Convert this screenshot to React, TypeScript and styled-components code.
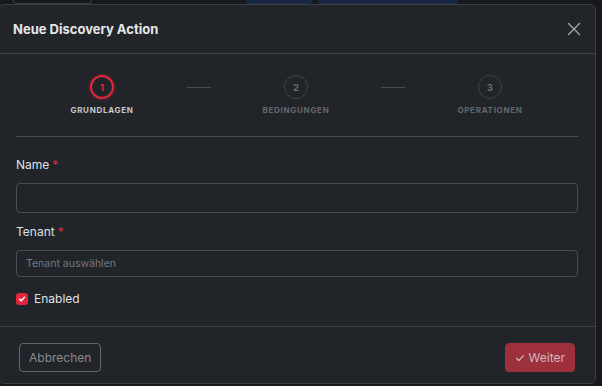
import React from "react";
import styled, { createGlobalStyle } from "styled-components";

const Global = createGlobalStyle`
  html, body { margin: 0; padding: 0; background: #17191c; overflow: hidden; }
  body { font-family: Inter, "Noto Sans", sans-serif; -webkit-font-smoothing: antialiased; }
  * { box-sizing: border-box; }
`;

const Page = styled.div`
  position: relative;
  width: 602px;
  height: 386px;
  background: #17191c;
  overflow: hidden;
`;

const PageBar = styled.div`
  display: flex;
  align-items: flex-end;
  gap: 6px;
  height: 20px;
  margin-top: -16px;
  padding-left: 13px;
`;

const Tag = styled.span<{ $blue?: boolean; $w?: number }>`
  display: inline-block;
  height: 20px;
  width: ${(p) => (p.$w ? `${p.$w}px` : "auto")};
  padding: 2px 8px;
  font-size: 11px;
  color: #6b6f75;
  border: 1px solid ${(p) => (p.$blue ? "#1d2c4a" : "#3a3d42")};
  background: ${(p) => (p.$blue ? "#172542" : "transparent")};
  border-radius: 3px;
`;

const Spacer = styled.div<{ $w: number }>`
  width: ${(p) => p.$w}px;
`;

const Overlay = styled.div`
  position: absolute;
  left: -2px;
  top: 4px;
  width: 598px;
  height: 380px;
`;

const Modal = styled.div`
  width: 100%;
  height: 100%;
  background: #212429;
  border: 1px solid #3b3e43;
  border-radius: 6px;
  display: flex;
  flex-direction: column;
  color: #e3e5e8;
`;

const Header = styled.div`
  display: flex;
  align-items: center;
  justify-content: space-between;
  height: 49px;
  padding: 0 12px 0 14px;
  border-bottom: 1px solid #3e4146;
`;

const Title = styled.h1`
  margin: 0;
  font-size: 13px;
  font-weight: 700;
  color: #e6e7e9;
`;

const CloseButton = styled.button`
  background: none;
  border: none;
  padding: 0;
  width: 18px;
  height: 18px;
  display: flex;
  align-items: center;
  justify-content: center;
  cursor: pointer;
`;

const Body = styled.div`
  flex: 1;
  padding: 0 17px;
  display: flex;
  flex-direction: column;
`;

const Stepper = styled.div`
  display: flex;
  align-items: flex-start;
  padding: 21px 0 0 1px;
  height: 83px;
  border-bottom: 1px solid #4a4d52;
`;

const Step = styled.div`
  width: 170px;
  display: flex;
  flex-direction: column;
  align-items: center;
`;

const Circle = styled.div<{ $active?: boolean }>`
  width: 24px;
  height: 24px;
  border-radius: 50%;
  border: ${(p) => (p.$active ? "2px solid #e0283c" : "1px solid #3f4247")};
  box-shadow: ${(p) => (p.$active ? "0 0 4px rgba(224, 40, 60, 0.45)" : "none")};
  color: ${(p) => (p.$active ? "#e0283c" : "#6d7177")};
  font-size: 9px;
  font-weight: 700;
  display: flex;
  align-items: center;
  justify-content: center;
`;

const StepLabel = styled.div<{ $active?: boolean }>`
  margin-top: 6px;
  font-size: 8px;
  font-weight: 700;
  letter-spacing: 0.7px;
  text-transform: uppercase;
  color: ${(p) => (p.$active ? "#c9cbce" : "#64686e")};
`;

const Connector = styled.div`
  width: 24px;
  height: 1px;
  margin-top: 12px;
  background: #4a4d52;
`;

const Form = styled.div`
  display: flex;
  flex-direction: column;
  padding-top: 20px;
`;

const Label = styled.label`
  font-size: 12px;
  font-weight: 400;
  color: #dfe1e4;
  line-height: 15px;
  margin-bottom: 11px;
`;

const Required = styled.span`
  color: #e0283c;
  margin-left: 3px;
`;

const Input = styled.input<{ $h: number }>`
  width: 100%;
  height: ${(p) => p.$h}px;
  background: transparent;
  border: 1px solid #4a4d53;
  border-radius: 4px;
  padding: 0 9px;
  font-family: inherit;
  font-size: 10.5px;
  color: #dfe1e4;
  outline: none;
  margin-bottom: 11px;
  &::placeholder { color: #74787e; }
`;

const CheckRow = styled.label`
  display: flex;
  align-items: center;
  gap: 6px;
  font-size: 12px;
  font-weight: 400;
  color: #dfe1e4;
  margin-top: 3px;
`;

const CheckBox = styled.span`
  width: 12px;
  height: 12px;
  border-radius: 3px;
  background: #e0283c;
  display: flex;
  align-items: center;
  justify-content: center;
`;

const Footer = styled.div`
  height: 57px;
  border-top: 1px solid #3e4146;
  display: flex;
  align-items: flex-start;
  justify-content: space-between;
  padding: 16px 20px 0 20px;
`;

const Button = styled.button<{ $primary?: boolean }>`
  height: 29px;
  padding: 0 9px;
  border-radius: 4px;
  font-family: inherit;
  font-size: 12px;
  display: flex;
  align-items: center;
  gap: 4px;
  cursor: pointer;
  border: 1px solid ${(p) => (p.$primary ? "#9e2f3c" : "#62666c")};
  background: ${(p) => (p.$primary ? "#9e2f3c" : "transparent")};
  color: ${(p) => (p.$primary ? "#cfb9bc" : "#878b91")};
`;

export default function App() {
  return (
    <Page>
      <Global />
      <PageBar>
        <Tag>Marienhaus</Tag>
        <Spacer $w={142} />
        <Tag $blue $w={66} />
        <Tag $blue $w={140} />
      </PageBar>
      <Overlay>
        <Modal>
          <Header>
            <Title>Neue Discovery Action</Title>
            <CloseButton aria-label="Schließen">
              <svg width="14" height="14" viewBox="0 0 14 14" fill="none">
                <path d="M1.5 1.5L12.5 12.5M12.5 1.5L1.5 12.5" stroke="#a3a6ab" strokeWidth="1.4" strokeLinecap="round" />
              </svg>
            </CloseButton>
          </Header>
          <Body>
            <Stepper>
              <Step>
                <Circle $active>1</Circle>
                <StepLabel $active>Grundlagen</StepLabel>
              </Step>
              <Connector />
              <Step>
                <Circle>2</Circle>
                <StepLabel>Bedingungen</StepLabel>
              </Step>
              <Connector />
              <Step>
                <Circle>3</Circle>
                <StepLabel>Operationen</StepLabel>
              </Step>
            </Stepper>
            <Form>
              <Label>
                Name<Required>*</Required>
              </Label>
              <Input $h={30} />
              <Label>
                Tenant<Required>*</Required>
              </Label>
              <Input $h={27} placeholder="Tenant auswählen" />
              <CheckRow>
                <CheckBox>
                  <svg width="8" height="8" viewBox="0 0 8 8" fill="none">
                    <path d="M1.5 4.2L3.2 5.8L6.5 2.3" stroke="#fff" strokeWidth="1.4" strokeLinecap="round" strokeLinejoin="round" />
                  </svg>
                </CheckBox>
                Enabled
              </CheckRow>
            </Form>
          </Body>
          <Footer>
            <Button>Abbrechen</Button>
            <Button $primary>
              <svg width="10" height="10" viewBox="0 0 10 10" fill="none">
                <path d="M1.5 5.2L3.9 7.5L8.5 2.6" stroke="#cfb9bc" strokeWidth="1.2" strokeLinecap="round" strokeLinejoin="round" />
              </svg>
              Weiter
            </Button>
          </Footer>
        </Modal>
      </Overlay>
    </Page>
  );
}
